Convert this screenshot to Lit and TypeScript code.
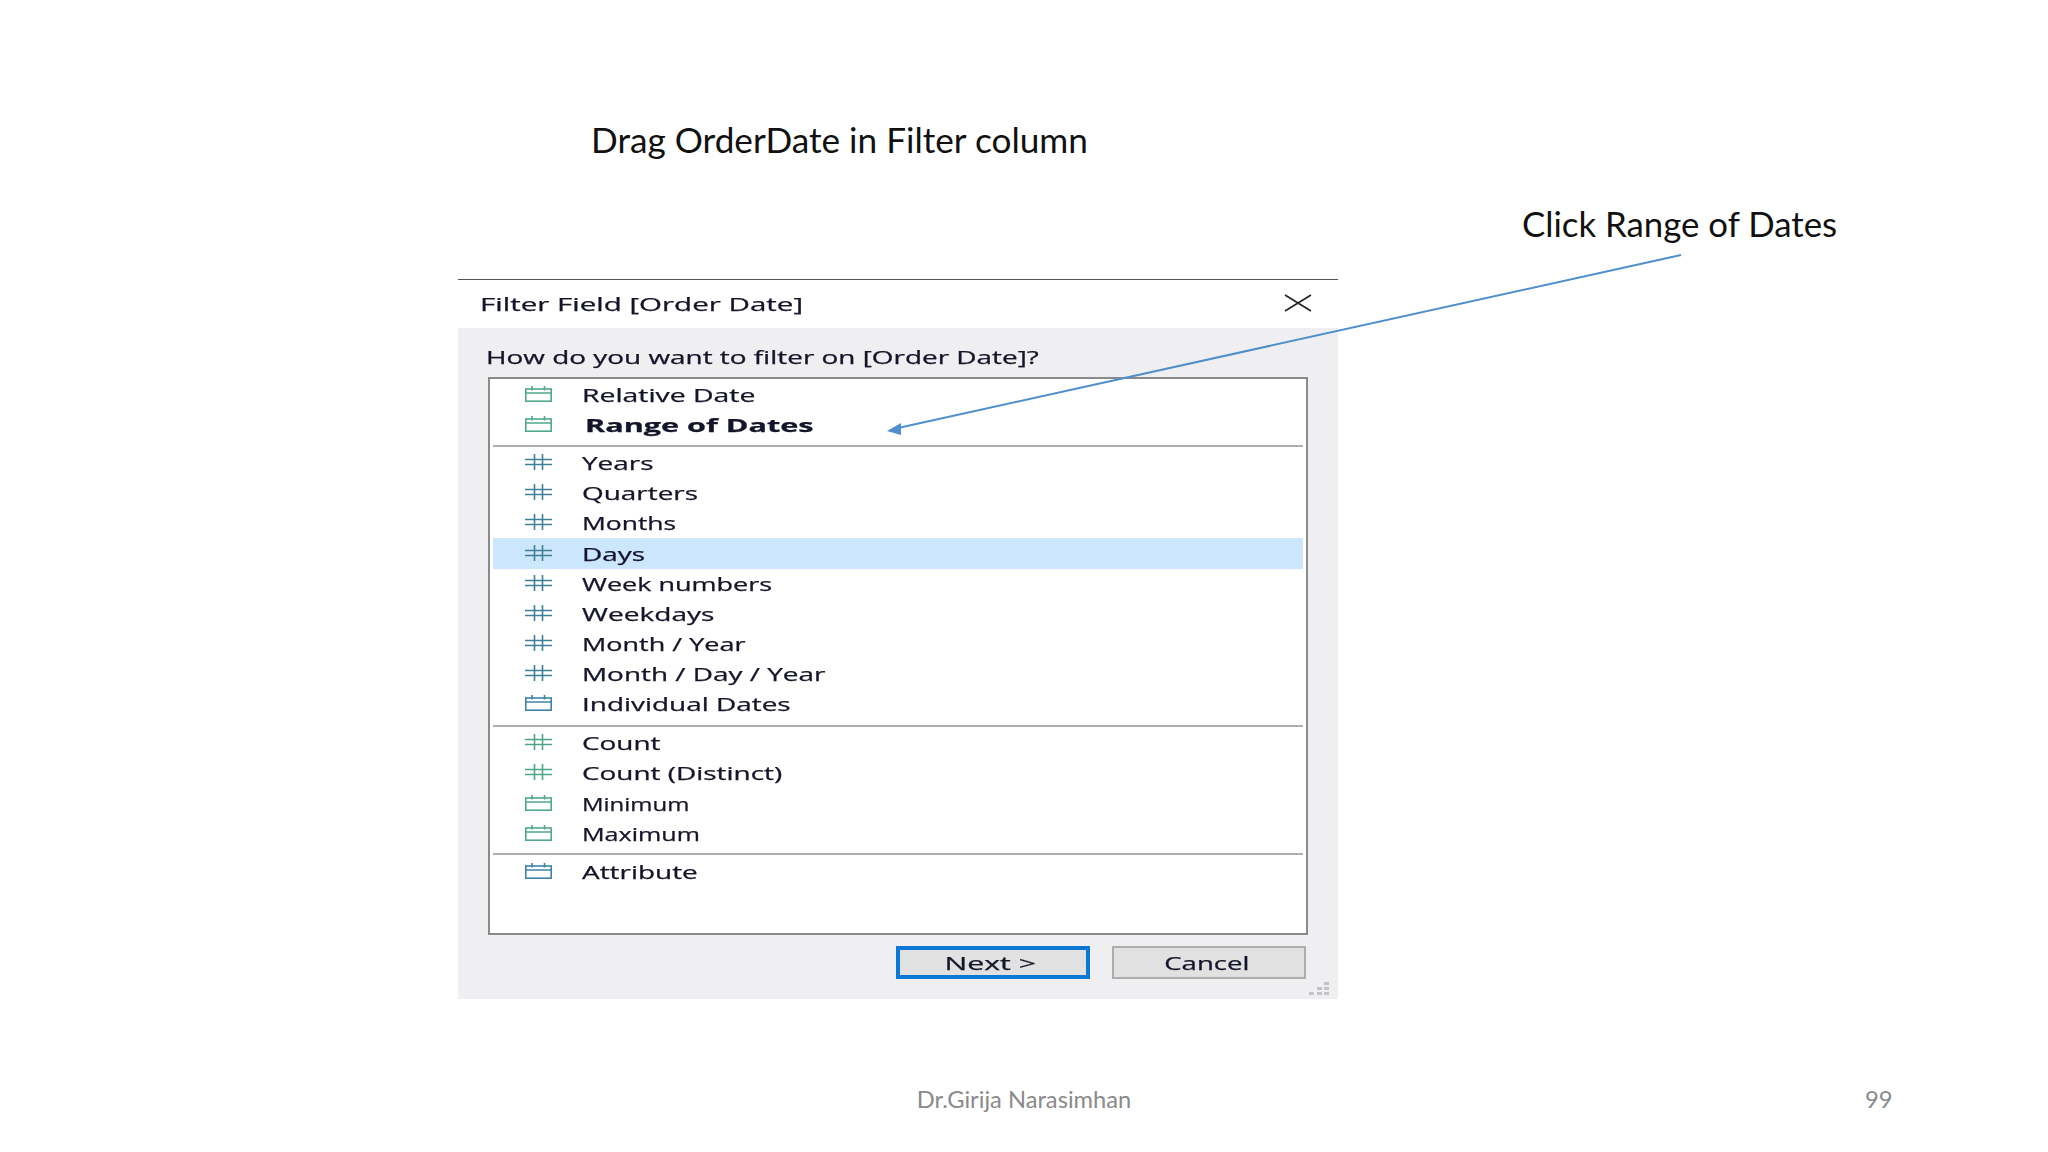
import { LitElement, html, css, svg } from "lit";
import { customElement } from "lit/decorators.js";

type Kind = "cal-green" | "cal-blue" | "hash-teal" | "hash-green";
interface Row { label: string; icon: Kind; bold?: boolean; selected?: boolean; sx?: number }

const sections: { cls: string; rows: Row[] }[] = [
  { cls: "s1", rows: [
    { label: "Relative Date", icon: "cal-green", sx: 1.575 },
    { label: "Range of Dates", icon: "cal-green", bold: true, sx: 1.7 },
  ]},
  { cls: "s2", rows: [
    { label: "Years", icon: "hash-teal" },
    { label: "Quarters", icon: "hash-teal" },
    { label: "Months", icon: "hash-teal", sx: 1.47 },
    { label: "Days", icon: "hash-teal", selected: true },
    { label: "Week numbers", icon: "hash-teal", sx: 1.5 },
    { label: "Weekdays", icon: "hash-teal", sx: 1.56 },
    { label: "Month / Year", icon: "hash-teal", sx: 1.5 },
    { label: "Month / Day / Year", icon: "hash-teal" },
    { label: "Individual Dates", icon: "cal-blue" },
  ]},
  { cls: "s3", rows: [
    { label: "Count", icon: "hash-green" },
    { label: "Count (Distinct)", icon: "hash-green" },
    { label: "Minimum", icon: "cal-green", sx: 1.33 },
    { label: "Maximum", icon: "cal-green", sx: 1.395 },
  ]},
  { cls: "s4", rows: [
    { label: "Attribute", icon: "cal-blue" },
  ]},
];

function icon(kind: Kind) {
  const color = { "cal-green": "#4fa98a", "cal-blue": "#3f84a8", "hash-teal": "#3f7f97", "hash-green": "#4ea586" }[kind];
  const isCal = kind.startsWith("cal");
  return html`<svg class="icon" width="27" height="16" viewBox="0 0 27 16" fill="none" stroke=${color} stroke-width="1.6">
    ${isCal
      ? svg`<rect x="0.8" y="3" width="25.4" height="12.2"/><path d="M0.8 7H26.2M7 0V4.5M19.5 0V4.5"/>`
      : svg`<path d="M0 5.5H27M0 10.5H27M9.5 0V16M17.5 0V16"/>`}
  </svg>`;
}

@customElement("app-root")
export class AppRoot extends LitElement {
  static styles = css`
    :host { display: block; position: relative; width: 2048px; height: 1152px; background: #fff; overflow: hidden; font-family: "Lato", "Open Sans", sans-serif; color: #111; }
    .heading { font-size: 35.2px; line-height: 44px; padding: 117px 0 0 591px; }
    .callout { font-size: 34.8px; line-height: 44px; padding: 41px 0 0 1522px; }
    .dialog { margin: 33px 0 0 458px; width: 880px; display: flex; flex-direction: column; font-family: "Open Sans", sans-serif; color: #14142a; }
    .wide { display: inline-block; transform-origin: left center; transform: scaleX(var(--sx, 1.55)); white-space: nowrap; filter: blur(0.4px); -webkit-text-stroke: 0.25px currentColor; }
    .titlebar { height: 48px; box-sizing: content-box; border-top: 1px solid #555; display: flex; align-items: center; justify-content: space-between; padding: 0 26px 0 22px; font-size: 18px; }
    .titlebar .wide { --sx: 1.64; }
    .close { display: block; position: relative; top: -1px; }
    .body { background: #efeff1; height: 671px; display: flex; flex-direction: column; padding: 0 30px; position: relative; }
    .question { height: 49px; display: flex; align-items: center; font-size: 18px; padding-top: 8px; box-sizing: border-box; margin-left: -2px; }
    .list { height: 558px; box-sizing: border-box; background: #fff; border: 2px solid #8a8a8a; padding: 0 3px; }
    .section { border-bottom: 2px solid #aeaeae; }
    .section.s4 { border-bottom: none; }
    .s1 { padding-top: 1px; padding-bottom: 5px; }
    .s2 { padding-bottom: 5.5px; padding-top: 0.5px; }
    .s3 { padding-bottom: 4.5px; padding-top: 1px; }
    .s4 { padding-top: 2px; }
    .row { height: 30.2px; display: flex; align-items: center; font-size: 18px; padding-left: 32px; }
    .row.selected { background: #cce6fd; }
    .icon { flex: none; margin-right: 30px; position: relative; top: -1px; }
    .row.bold { font-weight: 700; }
    .row.bold .wide { margin-left: 3px; }
    .actions { display: flex; justify-content: flex-end; gap: 22px; padding: 11px 2px 0 0; }
    .btn { width: 194px; height: 33px; box-sizing: border-box; background: #e1e1e1; border: 2px solid #adadad; display: flex; align-items: center; justify-content: center; font-size: 18px; }
    .btn.primary { border: 4px solid #0a78d4; }
    .btn .wide { transform-origin: center; --sx: 1.53; margin-right: 5px; }
    .btn.primary .wide { --sx: 1.68; }
    .grip { position: absolute; right: 8px; bottom: 3px; }
    .footer { position: absolute; left: 0; right: 0; top: 1085px; height: 28px; display: flex; justify-content: center; align-items: center; color: #8a8a8a; font-size: 23.7px; }
    .page { position: absolute; left: 1865px; }
    .overlay { position: absolute; left: 0; top: 0; pointer-events: none; }
  `;

  render() {
    return html`
      <div class="heading">Drag OrderDate in Filter column</div>
      <div class="callout">Click Range of Dates</div>
      <div class="dialog">
        <div class="titlebar">
          <span class="wide">Filter Field [Order Date]</span>
          <svg class="close" width="28" height="18" viewBox="0 0 28 18" stroke="#222" stroke-width="1.6" fill="none"><path d="M1 1L27 17M27 1L1 17"/></svg>
        </div>
        <div class="body">
          <div class="question"><span class="wide">How do you want to filter on [Order Date]?</span></div>
          <div class="list">
            ${sections.map((s) => html`<div class="section ${s.cls}">
              ${s.rows.map((r) => html`<div class="row ${r.bold ? "bold" : ""} ${r.selected ? "selected" : ""}">
                ${icon(r.icon)}<span class="wide" style=${r.sx ? `--sx:${r.sx}` : ""}>${r.label}</span>
              </div>`)}
            </div>`)}
          </div>
          <div class="actions">
            <div class="btn primary"><span class="wide">Next &gt;</span></div>
            <div class="btn"><span class="wide">Cancel</span></div>
          </div>
          <svg class="grip" width="22" height="14" viewBox="0 0 22 14" fill="#c4c4c6">
            <rect x="16" y="0" width="5" height="3"/><rect x="9" y="5" width="5" height="3"/><rect x="16" y="5" width="5" height="3"/>
            <rect x="1" y="10" width="5" height="3"/><rect x="9" y="10" width="5" height="3"/><rect x="16" y="10" width="5" height="3"/>
          </svg>
        </div>
      </div>
      <div class="footer">Dr.Girija Narasimhan<span class="page">99</span></div>
      <svg class="overlay" width="2048" height="1152" viewBox="0 0 2048 1152" fill="none">
        <line x1="1681" y1="255" x2="898" y2="428" stroke="#4f8fcb" stroke-width="2"/>
        <path d="M887 431L901 423L901 435Z" fill="#4f8fcb"/>
      </svg>
    `;
  }
}
